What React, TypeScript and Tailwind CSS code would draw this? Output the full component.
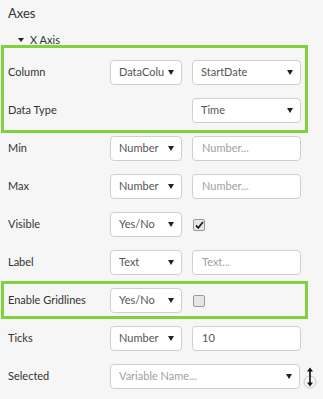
import type { ReactNode } from 'react'

const font = { fontFamily: 'Lato, "Open Sans", sans-serif' }

function Caret() {
  return (
    <svg width="6" height="5" viewBox="0 0 6 5" className="shrink-0">
      <path d="M0 0 L6 0 L3 5 Z" fill="#222" />
    </svg>
  )
}

function Select({ value, width, placeholder }: { value: string; width: string; placeholder?: boolean }) {
  return (
    <div
      className={`${width} flex h-[25px] items-center justify-between rounded-[4px] border border-[#cfcfcf] bg-white pl-[8px] pr-[7px] text-[11px]`}
    >
      <span className={`whitespace-nowrap ${placeholder ? 'text-[#a0a0a0]' : 'text-[#555]'}`}>{value}</span>
      <Caret />
    </div>
  )
}

function Input({ value, placeholder }: { value: string; placeholder?: boolean }) {
  return (
    <div className="flex h-[25px] w-[109px] items-center rounded-[4px] border border-[#cfcfcf] bg-white pl-[9px] text-[11px]">
      <span className={placeholder ? 'text-[#a0a0a0]' : 'text-[#555]'}>{value}</span>
    </div>
  )
}

function Checkbox({ checked }: { checked?: boolean }) {
  return (
    <div className="ml-[1px] flex h-[12px] w-[12px] items-center justify-center rounded-[2px] border border-[#9a9a9a] bg-[#e6e6e6]">
      {checked ? (
        <svg width="9" height="8" viewBox="0 0 9 8">
          <path d="M1 4.5 L3.3 6.8 L8 1" fill="none" stroke="#222" strokeWidth="1.8" />
        </svg>
      ) : null}
    </div>
  )
}

function Row({ label, children }: { label: string; children: ReactNode }) {
  return (
    <div className="flex h-[25px] items-center">
      <div className="w-[102px] text-[11px] text-[#333]">{label}</div>
      <div className="flex items-center gap-[10px]">{children}</div>
    </div>
  )
}

function App() {
  return (
    <div className="h-[399px] w-[323px] overflow-hidden bg-[#f6f6f6]" style={font}>
      <div className="pl-[8px] pt-[4px] text-[13px] leading-[18px] text-[#333]">Axes</div>
      <div className="mt-[10px] flex items-center gap-[6px] pl-[18px] text-[11px] leading-[16px] text-[#333]">
        <svg width="6" height="4" viewBox="0 0 6 4">
          <path d="M0 0 L6 0 L3 4 Z" fill="#222" />
        </svg>
        <span>X Axis</span>
      </div>

      <div className="ml-[1px] mt-[-3px] w-[307px] border-[3px] border-[#7ed23c] pb-[7px] pl-[4px] pt-[12px]">
        <div className="flex flex-col gap-[13px]">
          <Row label="Column">
            <Select value="DataColu" width="w-[72px]" />
            <Select value="StartDate" width="w-[109px]" />
          </Row>
          <Row label="Data Type">
            <div className="w-[72px]" />
            <Select value="Time" width="w-[109px]" />
          </Row>
        </div>
      </div>

      <div className="mt-[3px] flex flex-col gap-[13px] pl-[8px]">
        <Row label="Min">
          <Select value="Number" width="w-[72px]" />
          <Input value="Number..." placeholder />
        </Row>
        <Row label="Max">
          <Select value="Number" width="w-[72px]" />
          <Input value="Number..." placeholder />
        </Row>
        <Row label="Visible">
          <Select value="Yes/No" width="w-[72px]" />
          <Checkbox checked />
        </Row>
        <Row label="Label">
          <Select value="Text" width="w-[72px]" />
          <Input value="Text..." placeholder />
        </Row>
      </div>

      <div className="ml-[1px] mt-[6px] w-[307px] border-[3px] border-[#7ed23c] pb-[3px] pl-[4px] pt-[4px]">
        <Row label="Enable Gridlines">
          <Select value="Yes/No" width="w-[72px]" />
          <Checkbox />
        </Row>
      </div>

      <div className="mt-[7px] flex flex-col gap-[13px] pl-[8px]">
        <Row label="Ticks">
          <Select value="Number" width="w-[72px]" />
          <Input value="10" />
        </Row>
        <div className="flex h-[25px] items-center">
          <div className="w-[102px] text-[11px] text-[#333]">Selected</div>
          <Select value="Variable Name..." width="w-[190px]" placeholder />
          <svg width="14" height="24" viewBox="0 0 14 24" className="ml-[3px] mt-[2px]">
            <circle cx="7" cy="16" r="6" fill="none" stroke="#c8c8c8" strokeWidth="1" />
            <path d="M7 3 L7 19" stroke="#111" strokeWidth="1.6" />
            <path d="M4 5.5 L7 1.5 L10 5.5 Z" fill="#111" />
            <path d="M4 16.5 L7 20.5 L10 16.5 Z" fill="#111" />
          </svg>
        </div>
      </div>
    </div>
  )
}

export default App
